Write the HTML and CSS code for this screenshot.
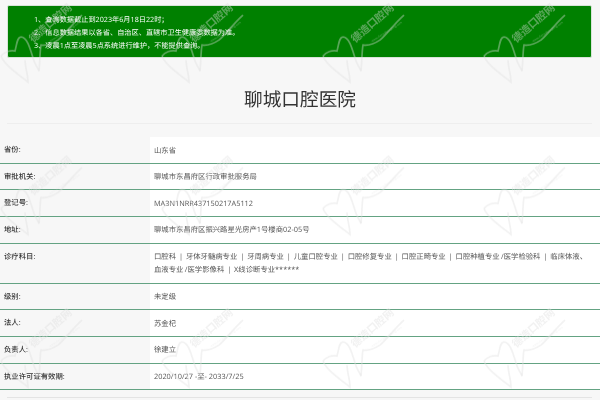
FILE: index.html
```html
<!DOCTYPE html>
<html lang="zh-CN">
<head>
<meta charset="utf-8">
<title>聊城口腔医院</title>
<link rel="stylesheet" href="styles.css">
</head>
<body>
<div class="alert">
  <ol class="notes">
    <li>1、查询数据截止到2023年6月18日22时；</li>
    <li>2、信息数据结果以各省、自治区、直辖市卫生健康委数据为准。</li>
    <li>3、凌晨1点至凌晨5点系统进行维护，不能提供查询。</li>
  </ol>
</div>
<h1 class="title">聊城口腔医院</h1>
<hr class="rule">
<div class="info">
  <div class="row"><div class="label">省份:</div><div class="value">山东省</div></div>
  <div class="row"><div class="label">审批机关:</div><div class="value">聊城市东昌府区行政审批服务局</div></div>
  <div class="row"><div class="label">登记号:</div><div class="value">MA3N1NRR437150217A5112</div></div>
  <div class="row"><div class="label">地址:</div><div class="value">聊城市东昌府区振兴路星光房产1号楼商02-05号</div></div>
  <div class="row row-tall"><div class="label">诊疗科目:</div><div class="value">口腔科 &nbsp;|&nbsp; 牙体牙髓病专业 &nbsp;|&nbsp; 牙周病专业 &nbsp;|&nbsp; 儿童口腔专业 &nbsp;|&nbsp; 口腔修复专业 &nbsp;|&nbsp; 口腔正畸专业 &nbsp;|&nbsp; 口腔种植专业 /医学检验科 &nbsp;|&nbsp; 临床体液、血液专业 /医学影像科 &nbsp;|&nbsp; X线诊断专业******</div></div>
  <div class="row"><div class="label">级别:</div><div class="value">未定级</div></div>
  <div class="row"><div class="label">法人:</div><div class="value">苏金杞</div></div>
  <div class="row"><div class="label">负责人:</div><div class="value">徐建立</div></div>
  <div class="row"><div class="label">执业许可证有效期:</div><div class="value">2020/10/27 -至- 2033/7/25</div></div>
</div>
<hr class="rule rule-end">
<svg class="watermark" width="600" height="400" aria-hidden="true">
  <defs>
    <pattern id="wm" x="0" y="0" width="161" height="152.5" patternUnits="userSpaceOnUse">
      <path class="wm-line" d="M1 56C4 52 10 50 15 51C17 44 17 37 21 37C27 37 30 48 33 58C35 65 38 68 39 71"/>
      <path class="wm-line" d="M1 56C4 64 15 72 28 82C28 75 25 66 25 60"/>
      <path class="wm-line" d="M39 71C40 60 40 50 41 45C47 46 52 44 58 40C65 34 72 24 82 15"/>
      <text class="wm-name" transform="translate(33 43) rotate(-41)">德造口腔网</text>
      <text class="wm-url" transform="translate(50 42) rotate(-32)">www.dezaokouqiang.com</text>
    </pattern>
  </defs>
  <rect width="600" height="400" fill="url(#wm)"/>
</svg>
</body>
</html>
```
FILE: styles.css
```css
* { box-sizing: border-box; }
html, body { margin: 0; height: 400px; overflow: hidden; }
body {
  position: relative;
  background: #f7f7f7;
  color: #444;
  font-family: "Open Sans", "Noto Sans CJK SC", sans-serif;
  font-size: 7.35px;
  text-rendering: geometricPrecision;
}
.alert {
  margin: 5px 8px 0 7px;
  height: 53px;
  padding: 7.5px 0 0 26px;
  background: #008000;
  border: 1px solid #d8e4d8;
  border-radius: 2px;
  color: #fff;
  font-size: 7.2px;
  line-height: 13.2px;
}
.notes { margin: 0; padding: 0; list-style: none; filter: blur(.25px); }
.title {
  margin: 0;
  height: 65px;
  line-height: 83px;
  text-align: center;
  font-size: 18.67px;
  font-weight: 400;
  color: #333;
  filter: blur(.25px);
}
.rule {
  margin: 0 8px 0 7px;
  border: 0;
  border-top: 1px solid #eee;
}
.info { margin-top: 13px; }
.row {
  display: flex;
  height: 26.67px;
  border-bottom: 1px solid #64a383;
}
.row-tall { height: 40px; }
.label {
  flex: 0 0 150px;
  padding: 8px 0 0 4px;
  line-height: 10.5px;
  color: #333;
  font-weight: 500;
  filter: blur(.25px);
}
.value {
  flex: 1;
  padding: 7.5px 15px 0 4px;
  background: #fff;
  line-height: 13.3px;
  color: #555;
  filter: blur(.2px);
}
.row-tall .value { padding-right: 8px; word-spacing: -.45px; }
.rule-end { margin-top: 6.5px; border-top-color: #e4e4e4; }
.watermark {
  position: absolute;
  left: 0;
  top: 0;
  pointer-events: none;
  filter: blur(.4px);
}
.wm-line { fill: none; stroke: rgba(222, 222, 222, .4); stroke-width: 1.7; }
.wm-name {
  fill: rgba(222, 222, 222, .42);
  font: 700 10.5px "Noto Sans CJK SC", sans-serif;
}
.wm-url {
  fill: rgba(222, 222, 222, .42);
  font: 400 3px "Open Sans", sans-serif;
}
```
